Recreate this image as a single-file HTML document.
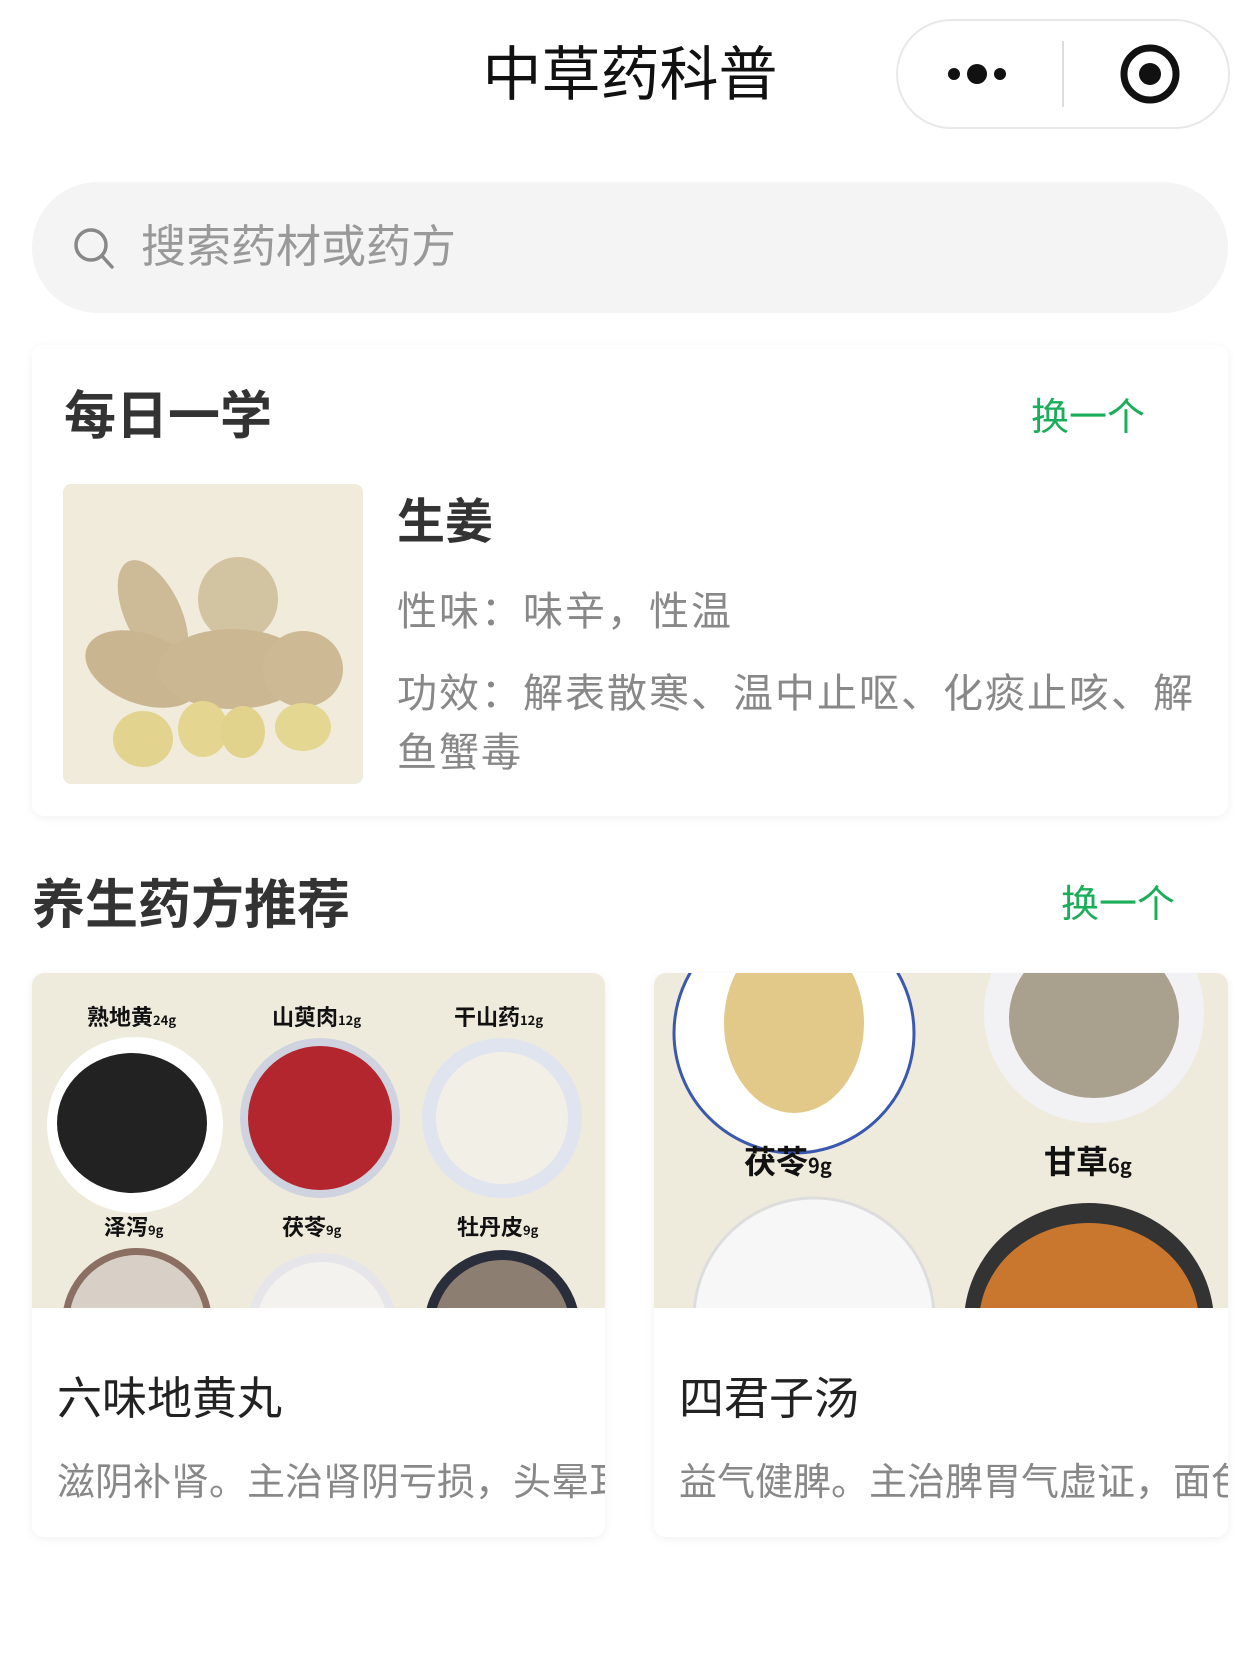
<!DOCTYPE html>
<html><head><meta charset="utf-8"><style>
*{margin:0;padding:0;box-sizing:border-box}
body{width:1260px;height:1680px;background:#fff;font-family:"Liberation Sans","Noto Sans CJK SC",sans-serif;position:relative;overflow:hidden;color:#222}
.abs{position:absolute}
.title{left:0;width:1260px;top:40px;text-align:center;font-size:59px;line-height:70px;color:#111}
.cap{left:896px;top:19px;width:334px;height:110px;border:2px solid #e8e8e8;border-radius:55px;background:#fff}
.search{left:32px;top:182px;width:1196px;height:131px;border-radius:66px;background:#f4f4f4}
.card{background:#fff;border-radius:12px;box-shadow:0 2px 10px rgba(0,0,0,0.06)}
.green{color:#1aad5a;font-size:38px}
.gray{color:#888;font-size:38px}
.g2{color:#888;font-size:40px;letter-spacing:2px}
</style></head><body>
<div class="abs title">中草药科普</div>
<div class="abs cap">
 <svg width="334" height="110" style="position:absolute;left:-2px;top:-2px">
  <circle cx="58" cy="55" r="6" fill="#111"/><circle cx="81" cy="55" r="10" fill="#111"/><circle cx="104" cy="55" r="6" fill="#111"/>
  <line x1="167" y1="22" x2="167" y2="88" stroke="#ddd" stroke-width="2"/>
  <circle cx="254" cy="55" r="26" fill="none" stroke="#111" stroke-width="7"/><circle cx="254" cy="55" r="11" fill="#111"/>
 </svg>
</div>
<div class="abs search">
 <svg width="50" height="50" style="position:absolute;left:38px;top:42px"><circle cx="21" cy="21" r="15" fill="none" stroke="#888" stroke-width="3.5"/><line x1="32" y1="32" x2="42" y2="43" stroke="#888" stroke-width="3.5" stroke-linecap="round"/></svg>
 <div style="position:absolute;left:109px;top:37px;font-size:45px;line-height:56px;color:#999">搜索药材或药方</div>
</div>
<div class="abs card" style="left:32px;top:345px;width:1196px;height:471px"></div>
<div class="abs" style="left:64px;top:387px;font-size:52px;font-weight:bold;color:#333;line-height:60px">每日一学</div>
<div class="abs green" style="left:1031px;top:394px;line-height:48px">换一个</div>
<div class="abs" style="left:63px;top:484px;width:300px;height:300px;border-radius:8px;background:#f1ebdc;overflow:hidden">
 <svg width="300" height="300">
  <ellipse cx="90" cy="130" rx="28" ry="58" transform="rotate(-25 90 130)" fill="#cdbb97"/>
  <ellipse cx="175" cy="115" rx="40" ry="42" fill="#d2c3a1"/>
  <ellipse cx="80" cy="185" rx="60" ry="35" transform="rotate(20 80 185)" fill="#c9b691"/>
  <ellipse cx="170" cy="185" rx="75" ry="40" fill="#cbb892"/>
  <ellipse cx="240" cy="185" rx="40" ry="38" fill="#cdba95"/>
  <ellipse cx="80" cy="255" rx="30" ry="28" fill="#e2d48e"/>
  <ellipse cx="140" cy="245" rx="25" ry="28" fill="#e4d690"/>
  <ellipse cx="180" cy="248" rx="22" ry="26" fill="#e1d38c"/>
  <ellipse cx="240" cy="243" rx="28" ry="24" fill="#e4d792"/>
 </svg>
</div>
<div class="abs" style="left:397px;top:494px;font-size:48px;font-weight:bold;color:#333;line-height:58px">生姜</div>
<div class="abs g2" style="left:397px;top:588px;line-height:48px">性味：味辛，性温</div>
<div class="abs g2" style="left:397px;top:665px;width:810px;line-height:59px">功效：解表散寒、温中止呕、化痰止咳、解鱼蟹毒</div>

<div class="abs" style="left:32px;top:875px;font-size:53px;font-weight:bold;color:#333;line-height:62px">养生药方推荐</div>
<div class="abs green" style="left:1061px;top:881px;line-height:48px">换一个</div>

<div class="abs card" style="left:32px;top:973px;width:573px;height:564px;overflow:hidden">
 <svg width="573" height="335" style="display:block;background:#efebdc">
  <g font-size="22" font-weight="bold" fill="#111" font-family="Noto Sans CJK SC,sans-serif">
   <text x="55" y="52">熟地黄<tspan font-size="13">24g</tspan></text>
   <text x="240" y="52">山萸肉<tspan font-size="13">12g</tspan></text>
   <text x="422" y="52">干山药<tspan font-size="13">12g</tspan></text>
   <text x="72" y="262">泽泻<tspan font-size="13">9g</tspan></text>
   <text x="250" y="262">茯苓<tspan font-size="13">9g</tspan></text>
   <text x="425" y="262">牡丹皮<tspan font-size="13">9g</tspan></text>
  </g>
  <circle cx="103" cy="152" r="88" fill="#fff"/><ellipse cx="100" cy="150" rx="75" ry="70" fill="#222"/>
  <circle cx="288" cy="145" r="80" fill="#cfd3e0"/><circle cx="288" cy="145" r="72" fill="#b3262e"/>
  <circle cx="470" cy="145" r="80" fill="#dfe4ee"/><circle cx="470" cy="145" r="66" fill="#f2efe6"/>
  <circle cx="105" cy="350" r="75" fill="#8a6f62"/><circle cx="105" cy="350" r="68" fill="#d8cfc6"/>
  <circle cx="290" cy="355" r="75" fill="#e6e6ea"/><circle cx="290" cy="355" r="66" fill="#f4f2ee"/>
  <circle cx="470" cy="355" r="78" fill="#2a2e3a"/><circle cx="470" cy="355" r="68" fill="#8d7e72"/>
 </svg>
 <div style="position:absolute;left:25px;top:398px;font-size:45px;color:#222;line-height:56px">六味地黄丸</div>
 <div class="gray" style="position:absolute;left:25px;top:486px;white-space:nowrap;line-height:48px">滋阴补肾。主治肾阴亏损，头晕耳鸣</div>
</div>
<div class="abs card" style="left:654px;top:973px;width:574px;height:564px;overflow:hidden">
 <svg width="574" height="335" style="display:block;background:#efebdc">
  <circle cx="140" cy="60" r="120" fill="#fff" stroke="#3a58b0" stroke-width="3"/>
  <ellipse cx="140" cy="50" rx="70" ry="90" fill="#e2c98a"/>
  <circle cx="440" cy="40" r="110" fill="#f2f2f4"/><ellipse cx="440" cy="45" rx="85" ry="80" fill="#a9a08e"/>
  <g font-size="32" font-weight="bold" fill="#111" font-family="Noto Sans CJK SC,sans-serif">
   <text x="90" y="200">茯苓<tspan font-size="20">9g</tspan></text>
   <text x="390" y="200">甘草<tspan font-size="20">6g</tspan></text>
  </g>
  <circle cx="160" cy="345" r="120" fill="#f7f7f7" stroke="#ddd" stroke-width="3"/>
  <ellipse cx="435" cy="350" rx="125" ry="120" fill="#333"/><ellipse cx="435" cy="350" rx="110" ry="100" fill="#c9772f"/>
 </svg>
 <div style="position:absolute;left:25px;top:398px;font-size:45px;color:#222;line-height:56px">四君子汤</div>
 <div class="gray" style="position:absolute;left:25px;top:486px;white-space:nowrap;line-height:48px">益气健脾。主治脾胃气虚证，面色萎白</div>
</div>
</body></html>
